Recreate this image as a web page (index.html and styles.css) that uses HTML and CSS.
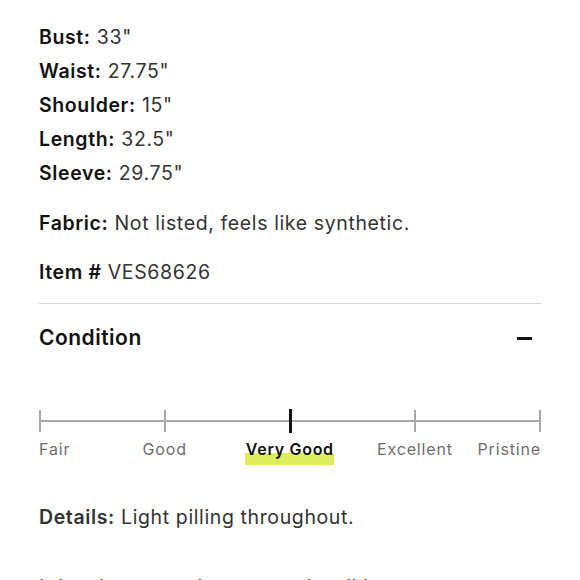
FILE: index.html
```html
<!DOCTYPE html>
<html>
<head>
<meta charset="utf-8">
<link rel="stylesheet" href="styles.css">
</head>
<body>
<div class="page">
  <div class="measures">
    <p class="row"><b>Bust:</b> 33"</p>
    <p class="row"><b>Waist:</b> 27.75"</p>
    <p class="row"><b>Shoulder:</b> 15"</p>
    <p class="row"><b>Length:</b> 32.5"</p>
    <p class="row"><b>Sleeve:</b> 29.75"</p>
  </div>
  <p class="row fabric"><b>Fabric:</b> Not listed, feels like synthetic.</p>
  <p class="row item"><b>Item #</b> VES68626</p>
  <div class="divider"></div>
  <div class="cond-head">
    <h2 class="cond-title">Condition</h2>
    <span class="minus"></span>
  </div>
  <div class="scale">
    <div class="track">
      <span class="tick"></span>
      <span class="tick"></span>
      <span class="tick active"></span>
      <span class="tick"></span>
      <span class="tick"></span>
    </div>
    <div class="labels">
      <span class="lbl first">Fair</span>
      <span class="lbl">Good</span>
      <span class="lbl current"><span class="hl">Very Good</span></span>
      <span class="lbl">Excellent</span>
      <span class="lbl last">Pristine</span>
    </div>
  </div>
  <p class="row details"><b>Details:</b> Light pilling throughout.</p>
  <p class="row more">It has been gently worn and well kept.</p>
</div>
</body>
</html>
```

FILE: styles.css
```css
html, body {
  margin: 0;
  padding: 0;
  background: #fff;
}
body {
  font-family: Inter, "Noto Sans", "Liberation Sans", sans-serif;
  color: #2b2b2b;
  overflow: hidden;
  height: 580px;
}
.page {
  padding: 20px 39px 0 39px;
}
.row {
  margin: 0;
  font-size: 19.5px;
  line-height: 34px;
  color: #333;
  letter-spacing: 0.62px;
}
.row b {
  color: #111;
  font-weight: 600;
}
.fabric {
  margin-top: 16px;
}
.item {
  margin-top: 15px;
}
.divider {
  height: 1px;
  background: #d6d6d6;
  margin-top: 14px;
}
.cond-head {
  display: flex;
  align-items: center;
  justify-content: space-between;
  height: 66px;
}
.cond-title {
  margin: 0;
  font-size: 21px;
  font-weight: 600;
  color: #111;
  letter-spacing: 0.5px;
}
.minus {
  width: 15px;
  height: 3px;
  background: #111;
  margin-right: 9px;
  margin-top: 3px;
}
.scale {
  margin-top: 39px;
}
.track {
  position: relative;
  height: 24px;
  display: flex;
  justify-content: space-between;
  align-items: center;
}
.track::before {
  content: "";
  position: absolute;
  left: 0;
  right: 0;
  top: 11px;
  height: 2px;
  background: #a8a8a8;
}
.tick {
  position: relative;
  width: 2px;
  height: 22px;
  background: #a8a8a8;
}
.tick.active {
  width: 3px;
  height: 24px;
  background: #111;
}
.labels {
  display: grid;
  grid-template-columns: 1fr 1fr 1fr 1fr 1fr;
  margin-left: -62px;
  margin-right: -62px;
  margin-top: 5px;
  font-size: 16px;
  line-height: 22px;
  color: #6e6e6e;
  letter-spacing: 0.85px;
}
.lbl {
  text-align: center;
}
.lbl.first {
  text-align: left;
  padding-left: 62px;
}
.lbl.last {
  text-align: right;
  padding-right: 62px;
}
.lbl.current {
  color: #111;
  font-weight: 600;
  letter-spacing: 0.7px;
}
.hl {
  position: relative;
  z-index: 0;
  display: inline-block;
  line-height: 22px;
}
.hl::after {
  content: "";
  position: absolute;
  left: -1px;
  right: 0px;
  top: 15px;
  height: 12px;
  background: #dcee5c;
  z-index: -1;
}
.details {
  margin-top: 40px;
}
.details b {
  color: #333;
}
.more {
  margin-top: 36px;
}
```
